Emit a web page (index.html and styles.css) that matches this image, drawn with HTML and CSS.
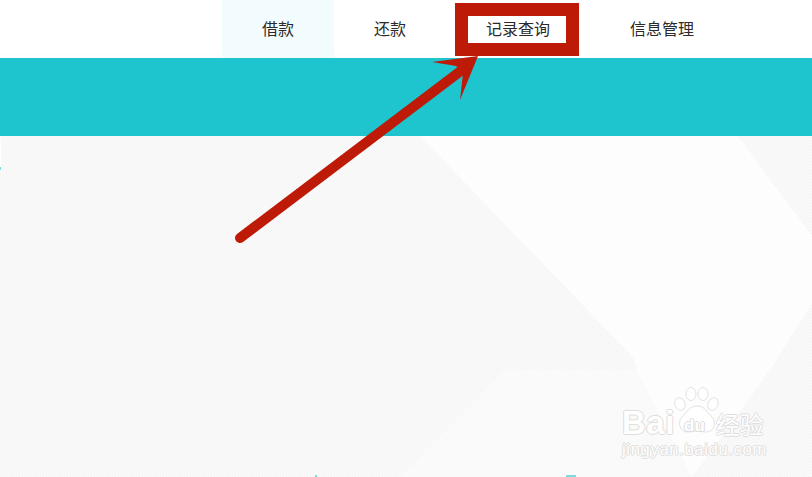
FILE: index.html
```html
<!DOCTYPE html>
<html lang="zh">
<head>
<meta charset="utf-8">
<title>记录查询</title>
<link rel="stylesheet" href="styles.css">
</head>
<body>
<header class="top">
  <nav class="nav">
    <a class="item active">借款</a>
    <a class="item">还款</a>
    <a class="item">记录查询</a>
    <a class="item">信息管理</a>
  </nav>
</header>
<div class="band"></div>
<main class="stage">
  <svg class="shapes" viewBox="0 0 812 341" width="812" height="341" aria-hidden="true">
    <defs>
      <pattern id="base" width="3" height="3" patternUnits="userSpaceOnUse">
        <rect width="3" height="3" fill="#fafafa"/>
        <path d="M0 0h1v1H0zM1 1h1v1H1zM2 2h1v1H2z" fill="#f4f4f4"/>
      </pattern>
      <pattern id="hatch" width="3" height="3" patternUnits="userSpaceOnUse">
        <rect width="3" height="3" fill="#fefefe"/>
        <path d="M2 0h1v1H2zM1 1h1v1H1zM0 2h1v1H0z" fill="#fcfcfc"/>
      </pattern>
      <pattern id="hatch2" width="3" height="3" patternUnits="userSpaceOnUse">
        <rect width="3" height="3" fill="#fbfbfb"/>
        <path d="M0 0h1v1H0zM1 1h1v1H1zM2 2h1v1H2z" fill="#f8f8f8"/>
      </pattern>
    </defs>
    <rect width="812" height="341" fill="url(#base)"/>
    <polygon points="400,341 505,234 640,234 692,341" fill="url(#hatch2)"/>
    <polygon points="420,0 738,0 812,100 812,167 770,234 692,341 637,234 633,221" fill="url(#hatch)"/>
  </svg>
  <span class="tick tick-strip"></span>
  <span class="tick tick-left"></span>
  <span class="tick tick-a"></span>
  <span class="tick tick-b"></span>
  <div class="mark">
    <div class="mark-top">
      <span class="mark-bai">Bai</span>
      <svg class="paw" viewBox="0 0 50 52" width="50" height="52" aria-hidden="true">
        <g fill="#fff" stroke="#e2e2e2" stroke-width="1">
          <ellipse cx="8" cy="17" rx="5" ry="6.5" transform="rotate(-25 8 17)"/>
          <ellipse cx="19" cy="7" rx="5" ry="6.5"/>
          <ellipse cx="31" cy="7" rx="5" ry="6.5"/>
          <ellipse cx="41" cy="17" rx="5" ry="6.5" transform="rotate(25 41 17)"/>
          <path d="M25 19c7 0 10 6 15 11 5 6 2 15-6 15-4 0-6-1-9-1s-5 1-9 1c-8 0-11-9-6-15 5-5 8-11 15-11z"/>
        </g>
      </svg>
      <span class="mark-du">du</span>
      <span class="mark-cn">经验</span>
    </div>
    <div class="mark-url">jingyan.baidu.com</div>
  </div>
</main>
<div class="callout"></div>
<svg class="arrow" viewBox="0 0 812 477" width="812" height="477" aria-hidden="true">
  <path d="M240 238 L462 70" stroke="#bd1a08" stroke-width="10" stroke-linecap="round" fill="none"/>
  <polygon points="478,56 432,62 456,66 463,73 460,100" fill="#bd1a08"/>
</svg>
</body>
</html>
```
FILE: styles.css
```css
* { box-sizing: border-box; }
html, body { margin: 0; height: 100%; overflow: hidden; }
body {
  position: relative;
  width: 812px;
  height: 477px;
  background: #fff;
  font-family: "Noto Sans CJK SC", "Liberation Sans", sans-serif;
}
.top {
  height: 58px;
  background: #fff;
  padding-left: 222px;
  box-shadow: inset 0 -5px 4px -3px #fbfbfb;
}
.nav { display: flex; height: 58px; }
.item {
  padding: 0 40px;
  font-size: 16px;
  line-height: 56px;
  color: #2a2a2a;
}
.active { background: #f2fbfd; }
.band { height: 78px; background: #1ec5cf; }
.stage {
  position: relative;
  height: 341px;
  overflow: hidden;
  background: #f8f8f8;
}
.shapes { position: absolute; left: 0; top: 0; display: block; }
.tick { position: absolute; background: #7fdade; }
.tick-strip { left: 0; top: 1px; width: 1px; height: 30px; background: #fff; }
.tick-left { left: 0; top: 31px; width: 1px; height: 3px; }
.tick-a { left: 315px; top: 339px; width: 2px; height: 2px; }
.tick-b { left: 566px; top: 339px; width: 10px; height: 2px; }
.mark { position: absolute; left: 622px; top: 253px; width: 150px; color: #fff; }
.mark-top { display: flex; align-items: flex-end; height: 48px; position: relative; }
.mark-bai, .mark-du, .mark-cn, .mark-url {
  color: #fff;
  text-shadow: 1px 0 0 #dedede, -1px 0 0 #dedede, 0 1px 0 #dedede, 0 -1px 0 #dedede;
}
.mark-bai {
  font: 700 33px/34px "Liberation Sans", sans-serif;
  letter-spacing: 0.5px;
  margin-right: -3px;
  margin-bottom: -3px;
}
.paw { flex: none; margin-bottom: -2px; }
.mark-du {
  position: absolute;
  left: 62px;
  top: 28px;
  font: 700 17px/18px "Liberation Sans", sans-serif;
}
.mark-cn {
  font-size: 24px;
  line-height: 32px;
  margin-left: -6px;
  margin-bottom: -3px;
}
.mark-url {
  font: 400 16.5px/20px "Liberation Sans", sans-serif;
  letter-spacing: 0.7px;
  margin-top: 2px;
  white-space: nowrap;
}
.callout {
  position: absolute;
  left: 455px;
  top: 3px;
  width: 124px;
  height: 53px;
  border: 13px solid #bd1a08;
}
.arrow { position: absolute; left: 0; top: 0; display: block; pointer-events: none; }
```
